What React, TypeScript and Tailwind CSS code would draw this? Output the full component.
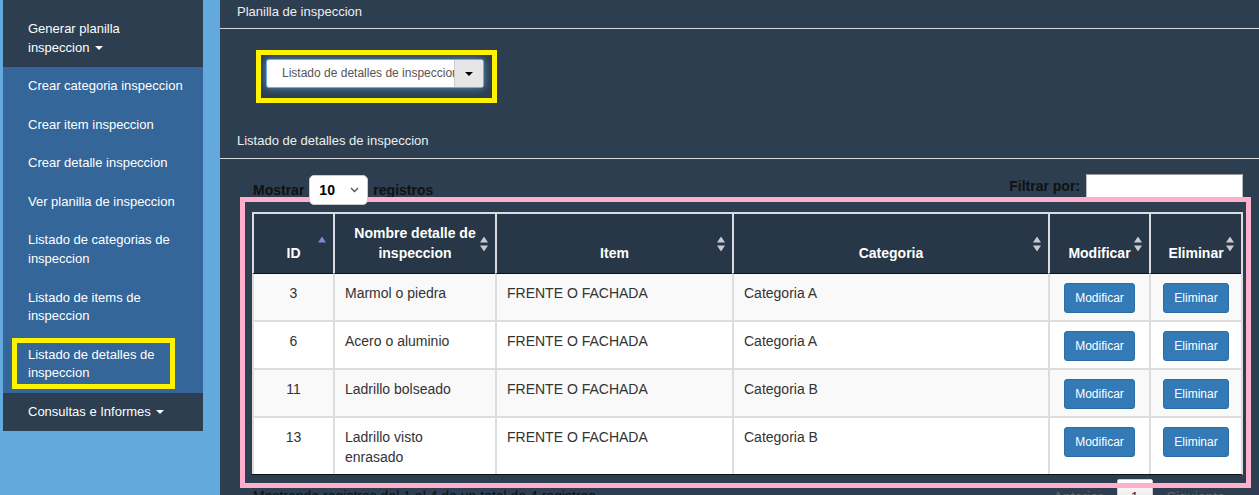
import React from "react";

type Row = { id: number; nombre: string; item: string; categoria: string };

const rows: Row[] = [
  { id: 3, nombre: "Marmol o piedra", item: "FRENTE O FACHADA", categoria: "Categoria A" },
  { id: 6, nombre: "Acero o aluminio", item: "FRENTE O FACHADA", categoria: "Categoria A" },
  { id: 11, nombre: "Ladrillo bolseado", item: "FRENTE O FACHADA", categoria: "Categoria B" },
  { id: 13, nombre: "Ladrillo visto enrasado", item: "FRENTE O FACHADA", categoria: "Categoria B" },
];

const subItems = [
  "Crear categoria inspeccion",
  "Crear item inspeccion",
  "Crear detalle inspeccion",
  "Ver planilla de inspeccion",
  "Listado de categorias de inspeccion",
  "Listado de items de inspeccion",
  "Listado de detalles de inspeccion",
];

function Caret({ dark }: { dark?: boolean }) {
  return (
    <span
      className={
        dark
          ? "inline-block h-0 w-0 border-x-[4px] border-t-[4px] border-x-transparent border-t-black align-middle"
          : "ml-[2px] inline-block h-0 w-0 border-x-[4px] border-t-[4px] border-x-transparent border-t-white align-middle"
      }
    />
  );
}

function SortIcon({ active }: { active?: boolean }) {
  return (
    <svg
      className="absolute right-[7px] top-1/2 -translate-y-1/2"
      width="8"
      height="15"
      viewBox="0 0 8 15"
    >
      {active ? (
        <polygon points="0,6 4,0 8,6" fill="#8585d8" />
      ) : (
        <>
          <polygon points="0,6 4,0 8,6" fill="#c8cbd0" />
          <polygon points="0,9 8,9 4,15" fill="#c8cbd0" />
        </>
      )}
    </svg>
  );
}

function Sidebar() {
  return (
    <aside className="w-[220px] shrink-0 bg-[#64a9dd]">
      <nav className="ml-[3px] w-[200px] text-[13px] leading-[18.57px] text-white">
        <div className="bg-[#2c3e50] pb-[10px] pl-[25px] pr-[10px] pt-[20px]">
          Generar planilla
          <br />
          inspeccion <Caret />
        </div>
        <ul className="bg-[#346699]">
          {subItems.map((label, i) => (
            <li key={label} className="relative py-[10px] pl-[25px] pr-[15px]">
              {label}
              {i === subItems.length - 1 && (
                <span className="pointer-events-none absolute left-[9px] top-[2px] h-[51px] w-[163px] border-[5px] border-[#fff200]" />
              )}
            </li>
          ))}
        </ul>
        <div className="bg-[#2c3e50] py-[10px] pl-[25px]">
          Consultas e Informes <Caret />
        </div>
      </nav>
    </aside>
  );
}

function DetallesTable() {
  const heads: { label: string; active?: boolean }[] = [
    { label: "ID", active: true },
    { label: "Nombre detalle de inspeccion" },
    { label: "Item" },
    { label: "Categoria" },
    { label: "Modificar" },
    { label: "Eliminar" },
  ];
  const th =
    "relative border-l-2 border-t-2 border-[#d9dde2] border-b border-b-[#111] bg-[#273747] px-[8px] pb-[10px] pt-[9px] align-bottom text-center text-[14px] font-bold leading-[20px] text-white";

  return (
    <table className="w-[991px] table-fixed border-separate border-spacing-0 border-b border-r-2 border-b-[#111] border-r-[#ddd]">
      <colgroup>
        <col className="w-[81px]" />
        <col className="w-[162px]" />
        <col className="w-[237px]" />
        <col className="w-[316px]" />
        <col className="w-[101px]" />
        <col className="w-[92px]" />
      </colgroup>
      <thead>
        <tr>
          {heads.map((h) => (
            <th key={h.label} className={th}>
              {h.label}
              <SortIcon active={h.active} />
            </th>
          ))}
        </tr>
      </thead>
      <tbody className="text-[14px] leading-[20px] text-[#333]">
        {rows.map((r, i) => {
          const td =
            "border-l-2 border-[#ddd] px-[10px] pb-[7px] pt-[9px] align-top " +
            (i > 0 ? "border-t-2 " : "") +
            (i % 2 === 0 ? "bg-[#f9f9f9]" : "bg-white");
          return (
            <tr key={r.id}>
              <td className={td + " text-center"}>{r.id}</td>
              <td className={td}>{r.nombre}</td>
              <td className={td}>{r.item}</td>
              <td className={td}>{r.categoria}</td>
              <td className={td}>
                <div className="flex justify-center">
                  <button className="h-[30px] rounded-[3px] border border-[#2e6da4] bg-[#337ab7] px-[10px] text-[12px] text-white">
                    Modificar
                  </button>
                </div>
              </td>
              <td className={td}>
                <div className="flex justify-center">
                  <button className="h-[30px] rounded-[3px] border border-[#2e6da4] bg-[#337ab7] px-[10px] text-[12px] text-white">
                    Eliminar
                  </button>
                </div>
              </td>
            </tr>
          );
        })}
      </tbody>
    </table>
  );
}

export default function App() {
  return (
    <div className="flex h-[495px] w-full overflow-hidden font-['Liberation_Sans',Arial,sans-serif]">
      <Sidebar />
      <main className="flex-1 bg-[#2d3e50]">
        <div className="h-[29px] border-b border-[#d6d9dc] pl-[17px] pt-[2px] text-[13px] leading-[19px] text-[#eee]">
          Planilla de inspeccion
        </div>

        <div className="relative ml-[46px] mt-[30px] w-[218px]">
          <span className="pointer-events-none absolute -left-[10px] -top-[9px] h-[53px] w-[241px] border-[5px] border-[#fff200]" />
          <div className="flex h-[29px] w-[218px] overflow-hidden rounded-[3px] border border-[#66afe9] bg-white shadow-[0_0_8px_rgba(102,175,233,0.7)]">
            <div className="flex-1 overflow-hidden whitespace-nowrap pl-[15px] text-[12px] leading-[27px] text-[#555]">
              Listado de detalles de inspeccion
            </div>
            <div className="flex w-[29px] shrink-0 items-center justify-center border-l border-[#ccc] bg-[#e6e6e6]">
              <Caret dark />
            </div>
          </div>
        </div>

        <div className="mt-[42px] h-[29px] border-b border-[#d6d9dc] pl-[17px] pt-[1px] text-[13px] leading-[19px] text-[#eee]">
          Listado de detalles de inspeccion
        </div>

        <div className="pl-[32px] pr-[16px]">
          <div className="mt-[16px] flex items-start justify-between">
            <div className="flex h-[30px] items-center pl-[1px] text-[14px] font-bold text-[#111]">
              <span>Mostrar</span>
              <div className="relative z-10 ml-[5px] flex h-[30px] w-[59px] items-center justify-between rounded-[5px] border border-[#ccc] bg-white pl-[9px] pr-[8px]">
                <span className="text-black">10</span>
                <svg width="9" height="6" viewBox="0 0 9 6">
                  <path d="M1 1l3.5 3.5L8 1" fill="none" stroke="#555" strokeWidth="1.4" />
                </svg>
              </div>
              <span className="ml-[5px]">registros</span>
            </div>
            <div className="-mt-[1px] flex h-[24px] items-center text-[14px] font-bold text-[#111]">
              <span>Filtrar por:</span>
              <div className="ml-[6px] h-[24px] w-[157px] border border-[#bbb] border-t-[#999] bg-white" />
            </div>
          </div>

          <div className="relative mt-[7px]">
            <span className="pointer-events-none absolute -left-[12px] -top-[15px] h-[291px] w-[1011px] border-[5px] border-[#ffaecb]" />
            <DetallesTable />
            <div className="flex items-start justify-between text-[14px] leading-[20px]">
              <div className="mt-[11px] pl-[1px] text-[#111]">
                Mostrando registros del 1 al 4 de un total de 4 registros
              </div>
              <div className="mr-[4px] mt-[4px] flex items-center text-[#666]">
                <span className="px-[14px] py-[7px]">Anterior</span>
                <span className="w-[36px] rounded-[2px] border border-[#ccc] bg-gradient-to-b from-white to-[#dcdcdc] py-[7px] text-center text-[#333]">
                  1
                </span>
                <span className="px-[14px] py-[7px]">Siguiente</span>
              </div>
            </div>
          </div>
        </div>
      </main>
    </div>
  );
}
